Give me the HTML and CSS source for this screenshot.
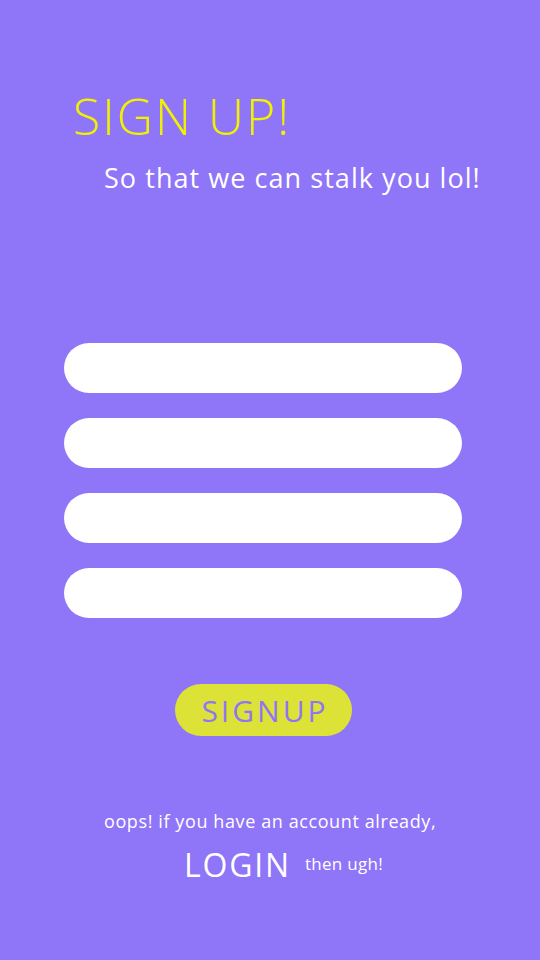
FILE: index.html
```html
<!DOCTYPE html>
<html>
<head>
<meta charset="utf-8">
<link rel="stylesheet" href="styles.css">
</head>
<body>
<main class="screen">
  <h1 class="title">SIGN UP!</h1>
  <p class="subtitle">So that we can stalk you lol!</p>
  <form class="fields">
    <input class="field" type="text">
    <input class="field" type="email">
    <input class="field" type="password">
    <input class="field" type="password">
  </form>
  <button class="signup">SIGNUP</button>
  <p class="oops">oops! if you have an account already,</p>
  <div class="login-row">
    <span class="login">LOGIN</span>
    <span class="ugh">then ugh!</span>
  </div>
</main>
</body>
</html>
```
FILE: styles.css
```css
html, body {
  margin: 0;
  padding: 0;
  background: #8f75f7;
}
.screen {
  width: 540px;
  height: 960px;
  display: flex;
  flex-direction: column;
  font-family: "Open Sans", "Noto Sans", sans-serif;
  color: #ffffff;
}
.title {
  margin: 86px 0 0 73px;
  font-size: 50px;
  font-weight: 300;
  line-height: 60px;
  color: #f2f200;
  letter-spacing: 2px;
}
.subtitle {
  margin: 16px 0 0 104px;
  font-size: 27px;
  line-height: 32px;
  font-weight: 400;
  letter-spacing: 1.05px;
}
.fields {
  margin: 149px 0 0 64px;
  display: flex;
  flex-direction: column;
  gap: 25px;
}
.field {
  width: 398px;
  height: 50px;
  border: none;
  border-radius: 25px;
  background: #ffffff;
  box-sizing: border-box;
  padding: 0 24px;
  outline: none;
}
.signup {
  align-self: flex-start;
  margin: 66px 0 0 175px;
  width: 177px;
  height: 52px;
  border: none;
  border-radius: 26px;
  background: #dde236;
  color: #8f75f7;
  font-family: "Open Sans", "Noto Sans", sans-serif;
  font-size: 30px;
  font-weight: 400;
  padding: 0 0 0 3px;
  line-height: 54px;
  letter-spacing: 3px;
}
.oops {
  margin: 74px 0 0 104px;
  font-size: 18px;
  line-height: 22px;
  letter-spacing: 0.6px;
}
.login-row {
  margin: 13px 0 0 184px;
  display: flex;
  align-items: center;
  gap: 14px;
}
.login {
  font-size: 32px;
  line-height: 40px;
  letter-spacing: 1.8px;
}
.ugh {
  font-size: 17px;
  line-height: 20px;
  letter-spacing: 0.3px;
  padding-bottom: 2px;
}
```
